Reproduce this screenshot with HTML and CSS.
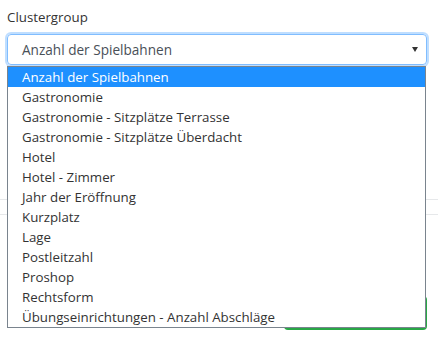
FILE: index.html
```html
<!DOCTYPE html>
<html>
<head>
    <meta name="viewport" content="width=device-width, initial-scale=1">
    <title>Clustergroup</title>
    <link rel="stylesheet" href="styles.css">
</head>
<body>

    <div class="formGroup">
        <label class="fieldLabel" for="cluster">Clustergroup</label>
        <div class="selectWrap">
            <div class="selectBox" id="cluster">
                <span class="selectText">Anzahl der Spielbahnen</span>
                <span class="caret"></span>
            </div>
            <ul class="optionList">
                <li class="selected">Anzahl der Spielbahnen</li>
                <li>Gastronomie</li>
                <li>Gastronomie - Sitzplätze Terrasse</li>
                <li>Gastronomie - Sitzplätze Überdacht</li>
                <li>Hotel</li>
                <li>Hotel - Zimmer</li>
                <li>Jahr der Eröffnung</li>
                <li>Kurzplatz</li>
                <li>Lage</li>
                <li>Postleitzahl</li>
                <li>Proshop</li>
                <li>Rechtsform</li>
                <li>Übungseinrichtungen - Anzahl Abschläge</li>
            </ul>
        </div>
    </div>

    <div class="divider"></div>
    <div class="divider second"></div>

    <div class="footer">
        <button type="button" class="saveBtn">Speichern</button>
    </div>

</body>
</html>
```

FILE: styles.css
```css
body {
    margin: 0;
    font-family: "Open Sans", Arial, sans-serif;
    font-size: 13.3px;
    color: #333;
    background: #fff;
}

.formGroup {
    padding: 7px 11px 0 7px;
}

.fieldLabel {
    display: block;
    color: #333;
    line-height: 20px;
    margin-bottom: 7px;
}

.selectWrap {
    position: relative;
}

.selectBox {
    height: 29px;
    border: 1px solid #80bdff;
    border-radius: 4px;
    box-shadow: 0 0 0 2px rgba(0, 123, 255, 0.25);
    display: flex;
    align-items: center;
    justify-content: space-between;
    padding: 0 8px 0 14px;
    color: #495057;
    font-size: 13.6px;
}

.caret {
    width: 0;
    height: 0;
    border-left: 3.5px solid transparent;
    border-right: 3.5px solid transparent;
    border-top: 5px solid #333;
}

.optionList {
    position: absolute;
    top: 32px;
    left: 0;
    right: 1px;
    margin: 0;
    padding: 0;
    list-style: none;
    background: #fff;
    border: 1px solid #7a848e;
    z-index: 10;
}

    .optionList li {
        height: 20px;
        line-height: 20px;
        padding-left: 14px;
        white-space: nowrap;
    }

    .optionList .selected {
        background-color: #1e90ff;
        color: #fff;
    }

.divider {
    height: 1px;
    background: #e6e8ea;
    margin-top: 134px;
}

    .divider.second {
        margin-top: 14px;
    }

.footer {
    display: flex;
    justify-content: flex-end;
    padding: 81px 11px 0 0;
}

.saveBtn {
    width: 143px;
    height: 34px;
    background-color: #28a745;
    color: #fff;
    border: none;
    border-radius: 4px;
    font-family: inherit;
    font-size: 13.3px;
}
```
